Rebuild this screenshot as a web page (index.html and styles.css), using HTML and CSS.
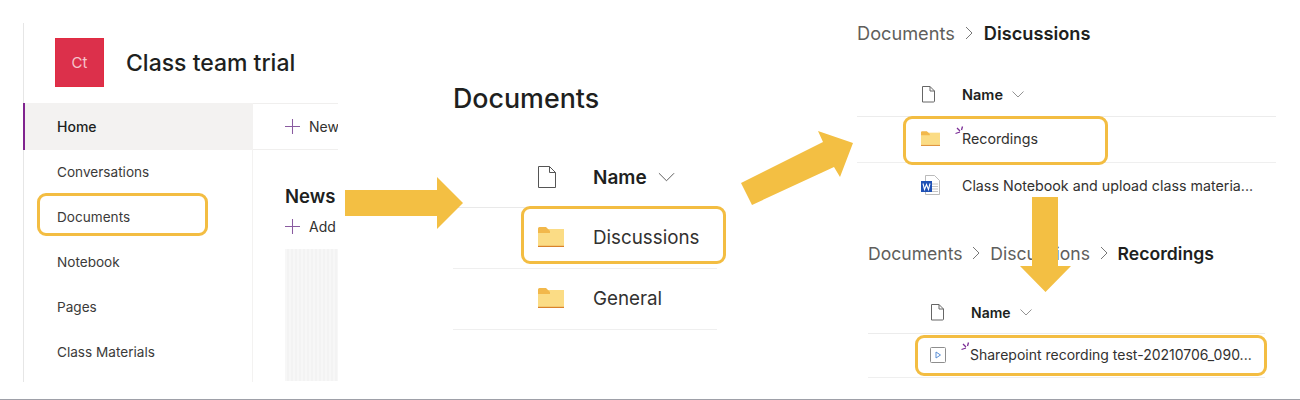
FILE: index.html
```html
<!DOCTYPE html>
<html lang="en">
<head>
<meta charset="utf-8">
<title>Finding a recording in SharePoint</title>
<link rel="stylesheet" href="styles.css">
</head>
<body>
<main class="canvas">

  <section class="panel site">
    <header class="site-head">
      <div class="site-logo">Ct</div>
      <h1 class="site-title">Class team trial</h1>
    </header>
    <div class="site-body">
      <nav class="nav">
        <div class="nav-item nav-active">Home</div>
        <div class="nav-item">Conversations</div>
        <div class="nav-item">Documents</div>
        <div class="nav-item">Notebook</div>
        <div class="nav-item">Pages</div>
        <div class="nav-item">Class Materials</div>
      </nav>
      <div class="site-main">
        <div class="cmdbar">
          <svg class="plus" viewBox="0 0 16 16"><path d="M8 0v16M0 8h16"/></svg>
          <span>New</span>
        </div>
        <h2 class="news">News</h2>
        <div class="add">
          <svg class="plus" viewBox="0 0 16 16"><path d="M8 0v16M0 8h16"/></svg>
          <span>Add</span>
        </div>
        <div class="placeholder"></div>
      </div>
    </div>
  </section>

  <section class="panel docs">
    <h2 class="docs-title">Documents</h2>
    <div class="lg-head">
      <svg class="lg-file" viewBox="0 0 18 22"><path d="M.5.5h11l6 6v15H.5zM11.5.5v6h6"/></svg>
      <span class="lg-name">Name</span>
      <svg class="lg-chev" viewBox="0 0 18 10"><path d="M1 1l8 8 8-8"/></svg>
    </div>
    <div class="lg-row">
      <svg class="lg-folder" viewBox="0 0 26 20"><use href="#folder"/></svg>
      <span>Discussions</span>
    </div>
    <div class="lg-row">
      <svg class="lg-folder" viewBox="0 0 26 20"><use href="#folder"/></svg>
      <span>General</span>
    </div>
  </section>

  <section class="panel disc">
    <div class="crumbs">
      <span class="crumb">Documents</span>
      <svg class="crumb-sep" viewBox="0 0 8 14"><path d="M1 1l6 6-6 6"/></svg>
      <span class="crumb-now">Discussions</span>
    </div>
    <div class="sm-head">
      <svg class="sm-file" viewBox="0 0 14 17"><path d="M1.500.5h7.500l4.500 4.500v10a1 1 0 0 1-1 1h-11v-15.500zM9 .5v4.500h4.500"/></svg>
      <span class="sm-name">Name</span>
      <svg class="sm-chev" viewBox="0 0 12 7"><path d="M.5.5l5.500 5.500 5.500-5.500"/></svg>
    </div>
    <div class="sm-row">
      <svg class="sm-folder" viewBox="0 0 26 20"><use href="#folder"/></svg>
      <svg class="spark" viewBox="0 0 10 9"><path d="M.5 7.500l4.500-1.500M2 2l3 3M7.500 .5l-1 3.500"/></svg>
      <span>Recordings</span>
    </div>
    <div class="sm-row sm-plain">
      <svg class="sm-word" viewBox="0 0 19 20">
        <path class="word-page" d="M4.500.5h9l5 5v14h-14z"/>
        <path class="word-lines" d="M11 9h6M11 11.500h6M11 14h6M11 16.500h6"/>
        <rect class="word-badge" x="0" y="6" width="11" height="11"/>
        <path class="word-w" d="M2 8.500l1.500 6 2-5 2 5 1.500-6"/>
      </svg>
      <span>Class Notebook and upload class materia...</span>
    </div>
  </section>

  <section class="panel rec">
    <div class="crumbs">
      <span class="crumb">Documents</span>
      <svg class="crumb-sep" viewBox="0 0 8 14"><path d="M1 1l6 6-6 6"/></svg>
      <span class="crumb">Discussions</span>
      <svg class="crumb-sep" viewBox="0 0 8 14"><path d="M1 1l6 6-6 6"/></svg>
      <span class="crumb-now">Recordings</span>
    </div>
    <div class="sm-head">
      <svg class="sm-file" viewBox="0 0 14 17"><path d="M1.500.5h7.500l4.500 4.500v10a1 1 0 0 1-1 1h-11v-15.500zM9 .5v4.500h4.500"/></svg>
      <span class="sm-name">Name</span>
      <svg class="sm-chev" viewBox="0 0 12 7"><path d="M.5.5l5.500 5.500 5.500-5.500"/></svg>
    </div>
    <div class="sm-row">
      <svg class="sm-video" viewBox="0 0 16 16">
        <rect class="video-box" x=".5" y=".5" width="15" height="15" rx="1"/>
        <path class="video-play" d="M6 5l4.500 3L6 11z"/>
      </svg>
      <svg class="spark" viewBox="0 0 10 9"><path d="M.5 7.500l4.500-1.500M2 2l3 3M7.500 .5l-1 3.500"/></svg>
      <span>Sharepoint recording test-20210706_090...</span>
    </div>
  </section>

  <div class="ring ring-nav"></div>
  <div class="ring ring-disc"></div>
  <div class="ring ring-rec"></div>
  <div class="ring ring-file"></div>

  <svg class="arrows" viewBox="0 0 1300 400">
    <path d="M345 190H437V177L463 203 437 229V216H345z"/>
    <path d="M741 183L823 142 818 131 853 143 840 177 834 167 752 205z"/>
    <path d="M1032 197H1058V266H1071L1045.500 292 1020 266H1032z"/>
  </svg>

  <svg class="defs" width="0" height="0">
    <defs>
      <g id="folder">
        <path fill="#fbdc85" d="M0 2h26v18H0z"/>
        <path fill="#f2b84b" d="M0 1.500A1.500 1.500 0 0 1 1.500 0H8l4 4v2H0z"/>
        <path fill="#fbdc85" d="M0 6h13l4-3h9v4H0z"/>
        <path fill="#d9822b" d="M0 18.800h26V20H0z"/>
      </g>
    </defs>
  </svg>
</main>
</body>
</html>
```
FILE: styles.css
```css
* { box-sizing: border-box; }
html, body { margin: 0; padding: 0; background: #fff; }
body {
  font-family: Inter, "Liberation Sans", sans-serif;
  color: #323130;
}
h1, h2 { margin: 0; }

.canvas {
  position: relative;
  width: 1300px;
  height: 400px;
  overflow: hidden;
  border-bottom: 1px solid #9ea0a8;
}
.panel { position: absolute; }

/* Site panel */
.site {
  left: 23px;
  top: 23px;
  width: 315px;
  height: 359px;
  display: flex;
  flex-direction: column;
  border-left: 1px solid #e6e6e6;
}
.site-head {
  height: 80px;
  flex: none;
  display: flex;
  align-items: center;
  gap: 22px;
  padding: 0 0 0 31px;
}
.site-logo {
  width: 49px;
  height: 49px;
  margin-bottom: 2px;
  display: flex;
  align-items: center;
  justify-content: center;
  background: #dc304b;
  border: 1px solid #e22b40;
  color: #f6c4cc;
  font-size: 15px;
}
.site-title {
  font-size: 23px;
  font-weight: 500;
  line-height: 30px;
  color: #201f1e;
  white-space: nowrap;
}
.site-body { flex: 1; display: flex; min-height: 0; }
.nav { width: 229px; flex: none; border-right: 1px solid #f3f2f1; }
.nav-item {
  height: 45px;
  display: flex;
  align-items: center;
  padding-left: 33px;
  font-size: 13.600px;
  color: #3b3a39;
}
.nav-active {
  height: 47px;
  margin-left: -1px;
  padding-left: 32px;
  background: #f3f2f1;
  border-left: 2px solid #80248f;
  color: #201f1e;
  font-size: 14px;
  font-weight: 500;
}
.nav-active + .nav-item { height: 44px; }
.site-main {
  flex: 1;
  min-width: 0;
  overflow: hidden;
}
.cmdbar {
  height: 47px;
  display: flex;
  align-items: center;
  gap: 9px;
  padding-left: 32px;
  border-top: 1px solid #f0efee;
  border-bottom: 1px solid #f0efee;
  font-size: 14px;
  white-space: nowrap;
}
.plus { width: 15px; height: 15px; flex: none; }
.plus path { fill: none; stroke: #8a5ba0; stroke-width: 1.100; }
.news {
  margin: 33px 0 0 32px;
  font-size: 18.500px;
  font-weight: 600;
  line-height: 26px;
  color: #201f1e;
}
.add {
  display: flex;
  align-items: center;
  gap: 9px;
  height: 20px;
  margin-top: 7px;
  padding-left: 32px;
  font-size: 14px;
  white-space: nowrap;
}
.placeholder {
  height: 132px;
  margin: 13px 0 0 32px;
  background: repeating-linear-gradient(90deg, #f7f7f7 0 2px, #f3f3f3 2px 4px);
}

/* Documents panel */
.docs { left: 453px; top: 81px; width: 264px; }
.docs-title {
  font-size: 26.800px;
  font-weight: 500;
  line-height: 34px;
  color: #201f1e;
}
.lg-head {
  display: flex;
  align-items: center;
  height: 93px;
  padding: 32px 0 0 85px;
  border-bottom: 1px solid #e9e9e9;
}
.lg-file { width: 18px; height: 22px; flex: none; margin-right: 37px; }
.lg-file path { fill: none; stroke: #555; stroke-width: 1; }
.lg-name { font-size: 19px; font-weight: 600; color: #201f1e; }
.lg-chev { width: 17px; height: 10px; margin-left: 11px; }
.lg-chev path { fill: none; stroke: #555; stroke-width: 1; }
.lg-row {
  display: flex;
  align-items: center;
  height: 61px;
  padding: 0 0 2px 85px;
  font-size: 18.800px;
  color: #323130;
  border-bottom: 1px solid #efefef;
}
.lg-folder { width: 26px; height: 20px; flex: none; margin-right: 29px; }

/* Breadcrumbs */
.crumbs {
  display: flex;
  align-items: center;
  height: 24px;
  font-size: 17.600px;
  white-space: nowrap;
}
.disc .crumbs { font-size: 18.200px; }
.crumb { color: #605e5c; }
.crumb-now { color: #201f1e; font-weight: 600; }
.crumb-sep { width: 8px; height: 14px; flex: none; margin: 0 10.500px; }
.rec .crumb-sep { margin: 0 9.800px; }
.crumb-sep path { fill: none; stroke: #777; stroke-width: 1; }

/* Small lists */
.disc { left: 857px; top: 21px; width: 419px; }
.rec { left: 868px; top: 241px; width: 397px; }
.sm-head {
  display: flex;
  align-items: center;
  height: 72px;
  padding: 28px 0 0 64px;
  border-bottom: 1px solid #ececec;
}
.rec .sm-head { height: 69px; padding: 27px 0 0 62px; }
.sm-file { width: 14px; height: 17px; flex: none; margin-right: 27px; }
.sm-file path { fill: none; stroke: #666; stroke-width: 1; }
.sm-name { font-size: 14px; font-weight: 600; color: #201f1e; }
.disc .sm-name { font-size: 14.500px; }
.sm-chev { width: 12px; height: 7px; margin-left: 9px; }
.sm-chev path { fill: none; stroke: #777; stroke-width: .8; }
.sm-row {
  position: relative;
  display: flex;
  align-items: center;
  height: 46px;
  padding: 0 0 2px 64px;
  font-size: 14.250px;
  color: #323130;
  white-space: nowrap;
  border-bottom: 1px solid #efefef;
}
.sm-plain { height: 44px; padding-bottom: 0; border-bottom: 0; }
.rec .sm-row { height: 44px; padding: 0 0 2px 62px; font-size: 14px; }
.sm-folder { width: 19px; height: 15px; flex: none; margin-right: 22px; }
.sm-word { width: 19px; height: 20px; flex: none; margin-right: 22px; }
.word-page { fill: #fff; stroke: #a9a9a9; stroke-width: .8; }
.word-lines { fill: none; stroke: #b5b5b5; stroke-width: .8; }
.word-badge { fill: #1f51b5; }
.word-w { fill: none; stroke: #fff; stroke-width: 1.100; }
.sm-video { width: 16px; height: 16px; flex: none; margin-right: 24px; }
.video-box { fill: #fff; stroke: #8e8e8e; stroke-width: 1; }
.video-play { fill: none; stroke: #5a8fd6; stroke-width: 1; }
.spark {
  position: absolute;
  left: 98px;
  top: 9px;
  width: 10px;
  height: 9px;
}
.rec .spark { left: 93px; top: 8px; }
.spark path { fill: none; stroke: #7b2d96; stroke-width: 1.300; }

/* Highlights and arrows that lie over the panels */
.ring {
  position: absolute;
  border: 3px solid #f3bd42;
  border-radius: 9px;
  background: transparent;
}
.ring-nav { left: 37px; top: 193px; width: 171px; height: 43px; }
.ring-disc { left: 521px; top: 206px; width: 205px; height: 58px; }
.ring-rec { left: 903px; top: 116px; width: 205px; height: 49px; }
.ring-file { left: 915px; top: 335px; width: 352px; height: 41px; }
.arrows {
  position: absolute;
  left: 0;
  top: 0;
  width: 1300px;
  height: 400px;
}
.arrows path { fill: #f3bf43; }
.defs { position: absolute; }
```
